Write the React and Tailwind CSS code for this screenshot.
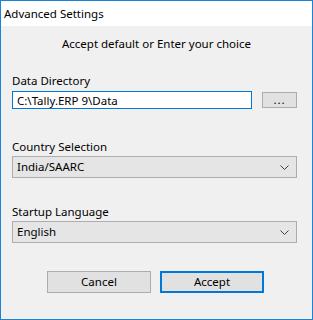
import React, { useState } from 'react';

const Chevron = () => (
  <svg width="9" height="5" viewBox="0 0 9 5" className="shrink-0">
    <polyline points="0.5,0.5 4.5,4.5 8.5,0.5" fill="none" stroke="#404040" strokeWidth="1" />
  </svg>
);

const Combo = ({ value }) => (
  <div className="h-[22px] w-[285px] flex items-center justify-between bg-[#e5e5e5] border border-[#adadad] pl-[4px] pr-[7px]">
    <span>{value}</span>
    <Chevron />
  </div>
);

const App = () => {
  const [dataDir, setDataDir] = useState('C:\\Tally.ERP 9\\Data');

  return (
    <div
      className="w-[313px] h-[320px] border border-[#1883d7] bg-[#f0f0f0] flex flex-col text-[11.5px] leading-[16px] text-black overflow-hidden"
      style={{ fontFamily: '"Noto Sans", "Open Sans", sans-serif' }}
    >
      {/* Barra de título */}
      <div className="h-[25px] bg-white flex items-center pl-[3px] shrink-0">
        Advanced Settings
      </div>

      <div className="flex flex-col pl-[11px]">
        <p className="mt-[10px] text-center pr-[11px]">Accept default or Enter your choice</p>

        {/* Directorio de datos */}
        <label className="mt-[21px]">Data Directory</label>
        <div className="mt-[2px] flex items-center gap-[10px]">
          <input
            value={dataDir}
            onChange={(e) => setDataDir(e.target.value)}
            className="h-[18px] w-[240px] bg-white border border-[#0078d7] px-[4px] outline-none text-[11.5px]"
          />
          <button className="h-[16px] w-[35px] bg-[#e1e1e1] border border-[#adadad] flex items-end justify-center leading-none pb-[2px] tracking-[1px]">
            ...
          </button>
        </div>

        {/* País */}
        <label className="mt-[30px]">Country Selection</label>
        <div className="mt-[1px]">
          <Combo value="India/SAARC" />
        </div>

        {/* Idioma */}
        <label className="mt-[26px]">Startup Language</label>
        <div className="mt-[1px]">
          <Combo value="English" />
        </div>

        {/* Botones */}
        <div className="mt-[28px] ml-[35px] flex gap-[9px]">
          <button className="h-[22px] w-[104px] bg-[#e1e1e1] border border-[#adadad]">Cancel</button>
          <button className="h-[22px] w-[104px] bg-[#e1e1e1] border-2 border-[#0078d7]">Accept</button>
        </div>
      </div>
    </div>
  );
};

export default App;
